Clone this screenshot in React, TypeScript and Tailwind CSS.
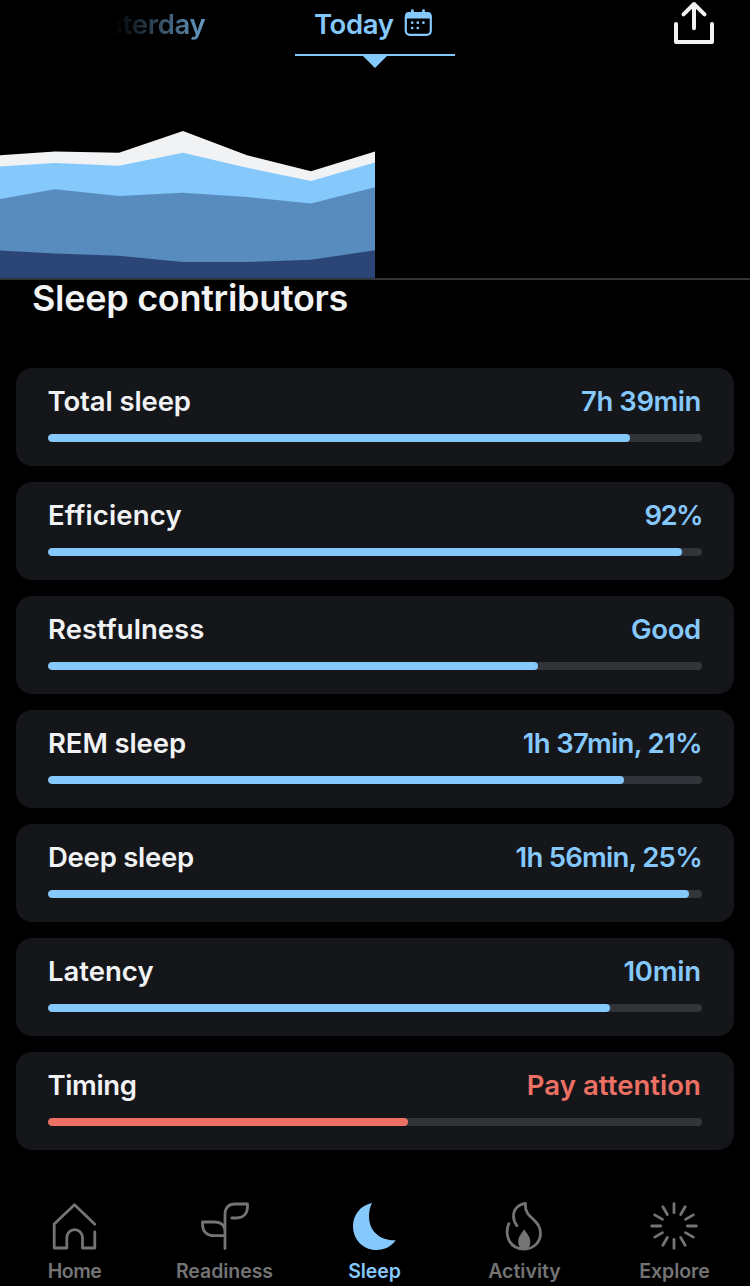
import type { ReactNode } from "react";

type Contributor = {
  label: string;
  labelClass: string;
  value: string;
  valueClass: string;
  fill: number;
  warn?: boolean;
};

const TRACK_WIDTH = 654;

const contributors: Contributor[] = [
  { label: "Total sleep", labelClass: "tracking-[-0.1px] -ml-[0.5px]", value: "7h 39min", valueClass: "tracking-[-0.45px] mr-px", fill: 582 },
  { label: "Efficiency", labelClass: "tracking-[0.15px]", value: "92%", valueClass: "tracking-[-1.6px]", fill: 634 },
  { label: "Restfulness", labelClass: "tracking-[0.05px]", value: "Good", valueClass: "tracking-[-0.3px] mr-px", fill: 490 },
  { label: "REM sleep", labelClass: "tracking-[-0.1px]", value: "1h 37min, 21%", valueClass: "tracking-[-0.65px]", fill: 575.5 },
  { label: "Deep sleep", labelClass: "tracking-[-0.25px]", value: "1h 56min, 25%", valueClass: "tracking-[-0.75px]", fill: 641 },
  { label: "Latency", labelClass: "tracking-[0px]", value: "10min", valueClass: "tracking-[-0.2px] mr-px", fill: 562 },
  { label: "Timing", labelClass: "tracking-[-0.4px] -ml-[0.5px]", value: "Pay attention", valueClass: "tracking-[0.05px] mr-px", fill: 360, warn: true },
];

const chartLayers = [
  { color: "#f1f2f4", points: "0,155.3 55,151.5 119,152.8 183,131 247,155.3 311,171.2 375,151.5" },
  { color: "#85c8fc", points: "0,166.4 55,163 119,165.8 183,152.7 247,167.7 311,181 375,162.6" },
  { color: "#588cbe", points: "0,199 55,189.3 119,196 183,192.8 247,197 311,203.4 375,187.3" },
  { color: "#2b4676", points: "0,250.4 55,253.6 119,255.7 183,262 247,262 311,259.7 375,250.3" },
];

const spokes = Array.from({ length: 12 }, (_, i) => i * 30);

function NavIcon({ children }: { children: ReactNode }) {
  return (
    <svg className="size-12 overflow-visible" viewBox="0.5 0 48 48" fill="none" stroke="currentColor" strokeWidth="2.8" strokeLinecap="round" strokeLinejoin="round">
      {children}
    </svg>
  );
}

function NavItem({ label, labelClass, active, children }: { label: string; labelClass: string; active?: boolean; children: ReactNode }) {
  return (
    <button type="button" className={`flex w-[150px] flex-col items-center ${active ? "text-[#85c8fc]" : "text-[#747475]"}`}>
      <NavIcon>{children}</NavIcon>
      <span className={`mt-[9px] mr-px text-[19.5px] leading-[25px] font-semibold ${labelClass}`}>{label}</span>
    </button>
  );
}

function ContributorCard({ item }: { item: Contributor }) {
  return (
    <div className="h-[98px] rounded-2xl bg-[#15161a] px-8 pt-4">
      <div className="flex justify-between text-[27.5px] leading-[35px] font-semibold whitespace-nowrap">
        <span className={`text-[#f1f2f4] ${item.labelClass}`}>{item.label}</span>
        <span className={`${item.warn ? "text-[#ec7063]" : "text-[#85c8fc]"} ${item.valueClass}`}>{item.value}</span>
      </div>
      <div className="mt-[15px] h-2 overflow-hidden rounded-full bg-[#323439]">
        <div
          className={`h-full rounded-full ${item.warn ? "bg-[#ec7063]" : "bg-[#85c8fc]"}`}
          style={{ width: `${(item.fill / TRACK_WIDTH) * 100}%` }}
        />
      </div>
    </div>
  );
}

export default function App() {
  return (
    <div className="flex h-[1286px] w-[750px] flex-col overflow-hidden bg-black font-['Inter',sans-serif]">
      <header className="flex h-[68px] shrink-0">
        <div className="flex w-[205.5px] items-start justify-end pt-[7px]">
          <span className="bg-linear-to-r from-transparent from-30% to-[#6a9dc7] bg-clip-text text-[27.5px] leading-[35px] font-semibold tracking-[-0.3px] text-transparent">
            Yesterday
          </span>
        </div>
        <div className="ml-[89.5px] flex w-40 flex-col items-center text-[#85c8fc]">
          <div className="flex h-[54px] w-full items-start pt-[7px] pl-[19px]">
            <span className="w-[89px] text-[27.5px] leading-[35px] font-semibold tracking-[-0.4px]">Today</span>
            <svg className="mt-px h-[30px] w-[30px]" viewBox="403 8 30 30" fill="none" stroke="currentColor" strokeLinecap="round">
              <rect x="405.8" y="13" width="25" height="21.8" rx="4" strokeWidth="2.2" />
              <path d="M405 18.4V16a4 4 0 0 1 4-4h18.600a4 4 0 0 1 4 4v2.4z" fill="currentColor" stroke="none" />
              <path d="M412.4 10.6v3M423.5 10.6v3" strokeWidth="2.8" />
              <path d="M412.2 22.7h.01M417.8 22.7h.01M423.4 22.7h.01M412.2 28h.01M417.8 28h.01" strokeWidth="2.7" />
            </svg>
          </div>
          <div className="h-[2px] w-full bg-[#85c8fc]" />
          <svg className="h-3 w-6" viewBox="0 0 24 12" fill="currentColor">
            <path d="M0 0h24L12 12z" />
          </svg>
        </div>
        <svg className="mr-[34px] ml-auto h-12 w-11" viewBox="672 0 44 48" fill="none" stroke="#f1f2f4" strokeWidth="4" strokeLinecap="round" strokeLinejoin="round">
          <path d="M694 28.2V4M683.5 14.4L694 4l10.5 10.4M676 24v18h36V24" />
        </svg>
      </header>

      <div className="h-[212px] shrink-0 border-b-2 border-[#323439]">
        <svg className="block h-[210px] w-[375px]" viewBox="0 68 375 210">
          {chartLayers.map((layer) => (
            <polygon key={layer.color} fill={layer.color} points={`${layer.points} 375,278 0,278`} />
          ))}
        </svg>
      </div>

      <h1 className="pl-8 text-[36px] leading-[37px] font-semibold tracking-[-0.3px] text-[#f1f2f4]">Sleep contributors</h1>

      <main className="mt-[51px] flex flex-col gap-4 px-4">
        {contributors.map((item) => (
          <ContributorCard key={item.label} item={item} />
        ))}
      </main>

      <nav className="mt-[52px] flex">
        <NavItem label="Home" labelClass="tracking-[-0.5px]">
          <path d="M44.3 22.3L24 2.7 3.7 22V46h12.6V35.5a7.8 7.8 0 0 1 15.7 0V46h12.3V30" />
        </NavItem>
        <NavItem label="Readiness" labelClass="tracking-[-0.05px]">
          <path d="M24.500 46.6V12.5C24.500 6 28 2 34.500 2H47v2.500C47 11.500 43 16 36 16h-4.700M24.500 33.700H13.500C6.500 33.700 2 29.500 2 22.500V20h12c6.500 0 10.500 3.500 10.500 9.500" />
        </NavItem>
        <NavItem label="Sleep" labelClass="tracking-[-0.1px]" active>
          <path d="M21.500 1C10 3.200 2.500 12.800 2.500 24.200 2.500 37.500 12.800 48 26 48c8.200 0 15-3.600 19.200-9.700C29.500 38.600 18.500 29.500 18.500 14c0-5 1-9 3-13z" fill="currentColor" stroke="none" />
        </NavItem>
        <NavItem label="Activity" labelClass="tracking-[0px]">
          <path d="M8.300 21.600C3.500 34 9.500 47 23.600 47 33.500 47 40 40 40 31c0-5.500-2.500-9.500-7-13.500-5.500-5-8.700-8-8-16.200-7 .9-12 5.700-12 12.700 0 4 1.300 7 3.400 9.700" />
          <path d="M23.800 27.300c-2.500 4-6.100 7-6.100 12.200 0 3.500 1.500 6.500 3.800 7.700h5c2.200-1.200 3.300-4 3.300-7.700 0-5-3.900-8.200-6-12.200z" fill="currentColor" stroke="none" />
        </NavItem>
        <NavItem label="Explore" labelClass="tracking-[-0.05px]">
          {spokes.map((angle) => (
            <path key={angle} d="M23.500 1.700v9" transform={`rotate(${angle} 23.5 24)`} />
          ))}
        </NavItem>
      </nav>
    </div>
  );
}
